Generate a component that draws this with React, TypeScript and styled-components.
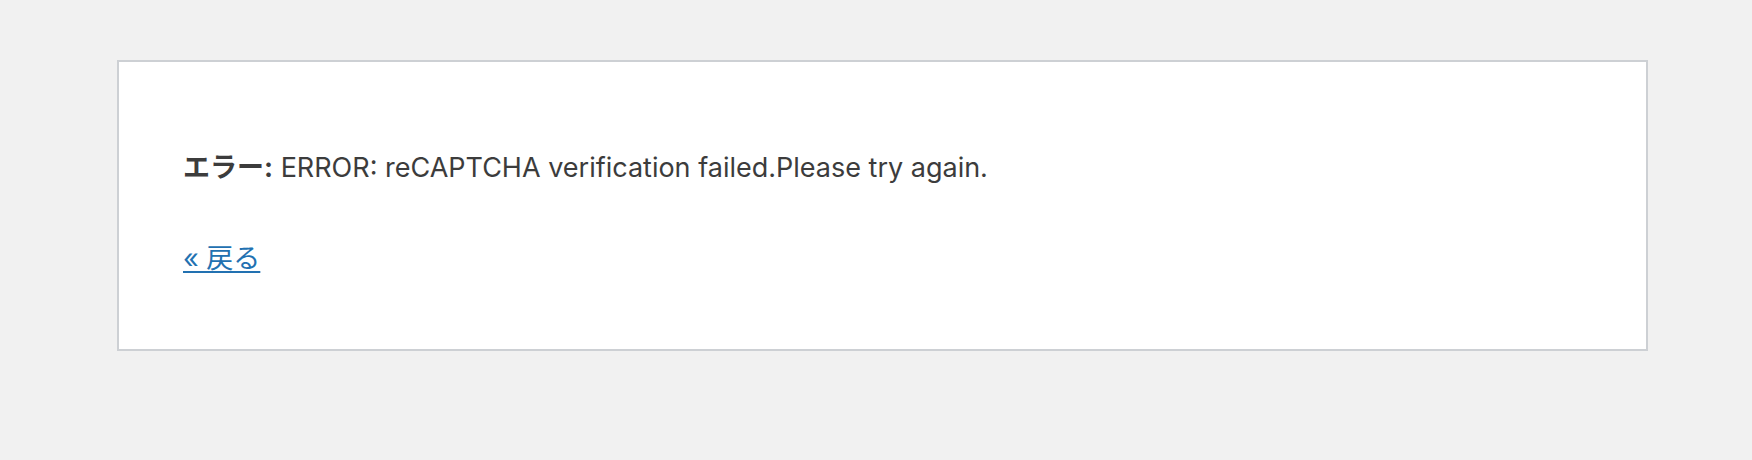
import React from "react";
import styled, { createGlobalStyle } from "styled-components";

const Global = createGlobalStyle`
  html {
    background: #f1f1f1;
  }
  body {
    margin: 0;
    font-family: Inter, "Noto Sans CJK JP", sans-serif;
  }
`;

const Page = styled.div`
  padding: 60px 0 0 117px;
`;

const DieBox = styled.div`
  box-sizing: border-box;
  width: 1531px;
  height: 291px;
  background: #fff;
  border: 2px solid #cdd0d4;
  padding: 0 64px;
  color: #3c3c3c;
  font-size: 27px;
  line-height: 39px;
`;

const Message = styled.p`
  margin: 86px 0 0;
`;

const Label = styled.strong`
  font-weight: 700;
`;

const BackLine = styled.p`
  margin: 52px 0 0;
`;

const BackLink = styled.a`
  color: #2271b1;
  text-decoration: underline;
  text-underline-offset: 3px;
`;

export default function App() {
  return (
    <>
      <Global />
      <Page>
        <DieBox>
          <Message>
            <Label>エラー:</Label> ERROR: reCAPTCHA verification failed.Please try again.
          </Message>
          <BackLine>
            <BackLink href="#">« 戻る</BackLink>
          </BackLine>
        </DieBox>
      </Page>
    </>
  );
}
